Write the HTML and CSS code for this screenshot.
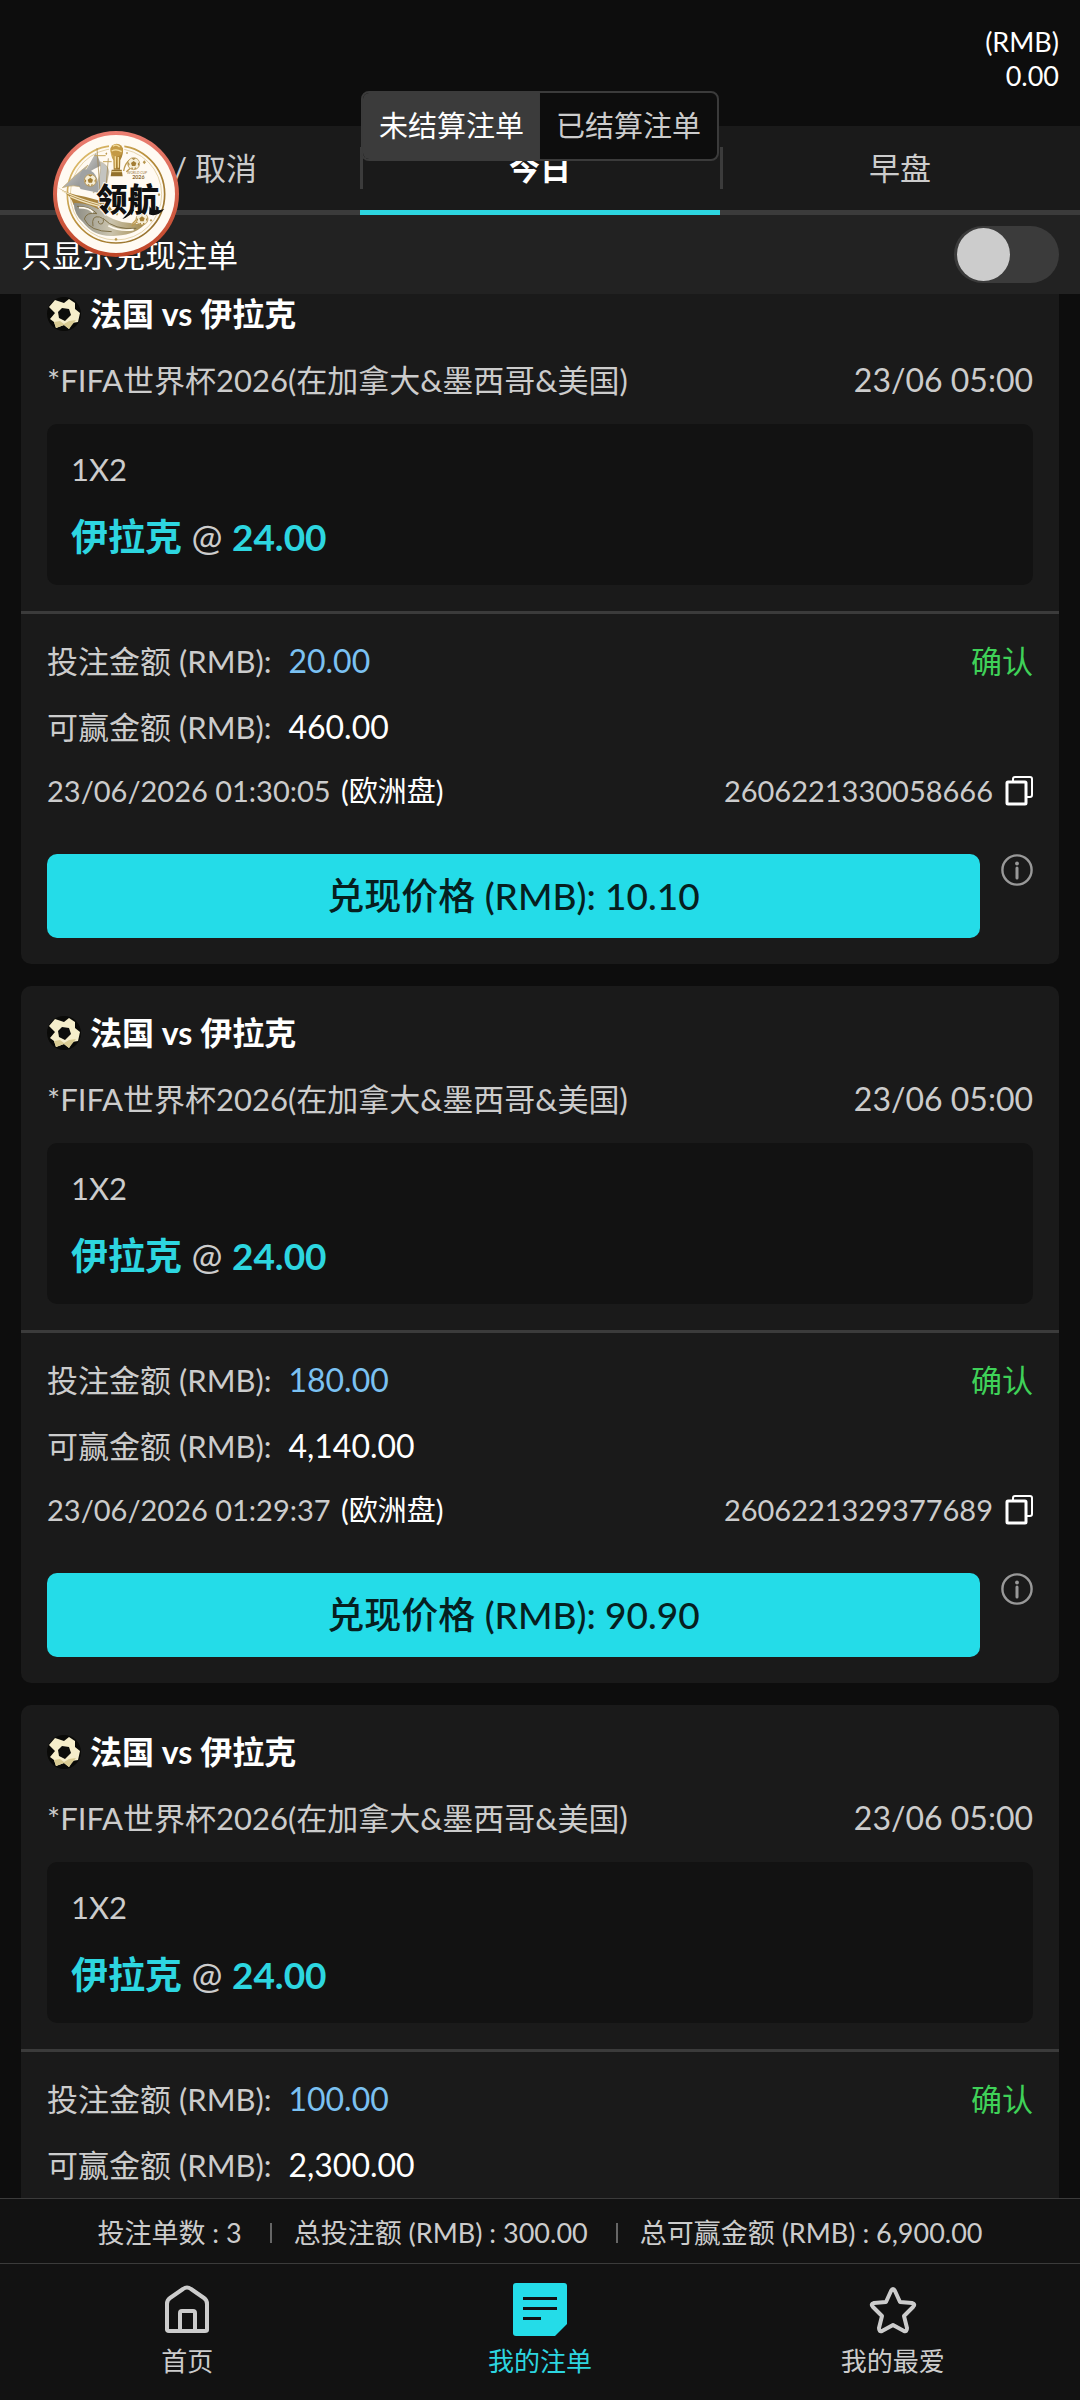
FILE: index.html
```
<!DOCTYPE html>
<html lang="zh-CN">
<head>
    <meta charset="UTF-8">
    <meta name="viewport" content="width=device-width, initial-scale=1.0">
    <title>我的注单</title>
    <link rel="stylesheet" href="styles.css">
</head>
<body>

    <!-- Shared icons -->
    <svg class="sprite" aria-hidden="true">
        <symbol id="icon-ball" viewBox="0 0 34 34">
            <circle cx="17" cy="17" r="17" fill="#0a0a08"/>
            <path d="M11 4 L17 6 L22 2 L28 6 L28 12 L33 16 L31 25 L25 26 L22 32 L17 28 L9 31 L7 25 L3 22 L8 16 L2 10 L8 3 Z" fill="#f6eecb"/>
            <path d="M7 25 L13 24 L17 27 L22 24 L29 23 L25 28 L22 32 L17 28 L9 31 Z" fill="#d9cb93"/>
            <path d="M15 11 L22 12 L24 18 L18 24 L12 21 L11 15 Z" fill="#0d0d0b"/>
        </symbol>
        <symbol id="icon-copy" viewBox="0 0 28 30">
            <path d="M8 6 V3 Q8 1 10 1 H25 Q27 1 27 3 V19 Q27 21 25 21 H22" fill="none" stroke="#fff" stroke-width="2"/>
            <rect x="2" y="6" width="19" height="22" rx="1" fill="none" stroke="#fff" stroke-width="3"/>
        </symbol>
        <symbol id="icon-info" viewBox="0 0 32 32">
            <circle cx="16" cy="16" r="14.6" fill="none" stroke="#999" stroke-width="2.4"/>
            <circle cx="16" cy="9.5" r="1.9" fill="#999"/>
            <path d="M16 14 V24" stroke="#999" stroke-width="3" stroke-linecap="round"/>
        </symbol>
    </svg>

    <header class="topbar">
        <div class="balance">
            <div>(RMB)</div>
            <div>0.00</div>
        </div>
        <div class="switcher">
            <button type="button" class="switcher-btn active">未结算注单</button>
            <button type="button" class="switcher-btn">已结算注单</button>
        </div>
    </header>

    <div class="tabs">
        <button type="button" class="tab">拒绝 / 取消</button>
        <button type="button" class="tab active">今日</button>
        <button type="button" class="tab">早盘</button>
    </div>

    <div class="filter">
        <label for="cashoutOnly">只显示兑现注单</label>
        <input type="checkbox" id="cashoutOnly" class="toggle">
    </div>

    <main class="bets" id="bets">
        <article class="card">
            <section class="match">
                <h2 class="teams"><svg class="ball"><use href="#icon-ball"/></svg>法国 vs 伊拉克</h2>
                <div class="row">
                    <span>*FIFA世界杯2026(在加拿大&amp;墨西哥&amp;美国)</span>
                    <time>23/06 05:00</time>
                </div>
                <div class="pick">
                    <div class="market">1X2</div>
                    <div class="odds"><b>伊拉克</b> <span>@</span> <b>24.00</b></div>
                </div>
            </section>
            <section class="detail">
                <div class="row">
                    <span class="amount">投注金额 (RMB): <span class="stake">20.00</span></span>
                    <span class="status">确认</span>
                </div>
                <div class="row">
                    <span class="amount">可赢金额 (RMB): <span class="win">460.00</span></span>
                </div>
                <div class="row meta">
                    <span>23/06/2026 01:30:05 <span class="market-type">(欧洲盘)</span></span>
                    <span class="bet-id">2606221330058666
                        <button type="button" class="icon-btn" aria-label="复制"><svg class="copy"><use href="#icon-copy"/></svg></button>
                    </span>
                </div>
                <div class="cashout">
                    <button type="button" class="cashout-btn">兑现价格 (RMB): 10.10</button>
                    <button type="button" class="icon-btn" aria-label="说明"><svg class="info"><use href="#icon-info"/></svg></button>
                </div>
            </section>
        </article>

        <article class="card">
            <section class="match">
                <h2 class="teams"><svg class="ball"><use href="#icon-ball"/></svg>法国 vs 伊拉克</h2>
                <div class="row">
                    <span>*FIFA世界杯2026(在加拿大&amp;墨西哥&amp;美国)</span>
                    <time>23/06 05:00</time>
                </div>
                <div class="pick">
                    <div class="market">1X2</div>
                    <div class="odds"><b>伊拉克</b> <span>@</span> <b>24.00</b></div>
                </div>
            </section>
            <section class="detail">
                <div class="row">
                    <span class="amount">投注金额 (RMB): <span class="stake">180.00</span></span>
                    <span class="status">确认</span>
                </div>
                <div class="row">
                    <span class="amount">可赢金额 (RMB): <span class="win">4,140.00</span></span>
                </div>
                <div class="row meta">
                    <span>23/06/2026 01:29:37 <span class="market-type">(欧洲盘)</span></span>
                    <span class="bet-id">2606221329377689
                        <button type="button" class="icon-btn" aria-label="复制"><svg class="copy"><use href="#icon-copy"/></svg></button>
                    </span>
                </div>
                <div class="cashout">
                    <button type="button" class="cashout-btn">兑现价格 (RMB): 90.90</button>
                    <button type="button" class="icon-btn" aria-label="说明"><svg class="info"><use href="#icon-info"/></svg></button>
                </div>
            </section>
        </article>

        <article class="card">
            <section class="match">
                <h2 class="teams"><svg class="ball"><use href="#icon-ball"/></svg>法国 vs 伊拉克</h2>
                <div class="row">
                    <span>*FIFA世界杯2026(在加拿大&amp;墨西哥&amp;美国)</span>
                    <time>23/06 05:00</time>
                </div>
                <div class="pick">
                    <div class="market">1X2</div>
                    <div class="odds"><b>伊拉克</b> <span>@</span> <b>24.00</b></div>
                </div>
            </section>
            <section class="detail">
                <div class="row">
                    <span class="amount">投注金额 (RMB): <span class="stake">100.00</span></span>
                    <span class="status">确认</span>
                </div>
                <div class="row">
                    <span class="amount">可赢金额 (RMB): <span class="win">2,300.00</span></span>
                </div>
            </section>
        </article>
    </main>

    <footer class="bottom">
        <div class="summary">
            <span>投注单数 : 3</span>
            <span>总投注额 (RMB) : 300.00</span>
            <span>总可赢金额 (RMB) : 6,900.00</span>
        </div>
        <nav class="nav">
            <a href="#" class="nav-item">
                <svg class="nav-icon" viewBox="0 0 54 54">
                    <path d="M7 47 V21 Q7 17 10 15 L23 6 Q27 3 31 6 L44 15 Q47 17 47 21 V47 Q47 48 45 48 H9 Q7 48 7 46 Z" fill="none" stroke="#ccc" stroke-width="4" stroke-linejoin="round"/>
                    <path d="M20 48 V30 Q20 28 22 28 H33 Q35 28 35 30 V48" fill="none" stroke="#ccc" stroke-width="4"/>
                </svg>
                首页
            </a>
            <a href="#" class="nav-item active">
                <svg class="nav-icon" viewBox="0 0 54 54">
                    <path d="M3 0 H51 Q54 0 54 3 V41 L42 53 H3 Q0 53 0 50 V3 Q0 0 3 0 Z" fill="#24dce8"/>
                    <path d="M10 15.5 H44 M10 25.5 H44 M10 35.5 H28" stroke="#121212" stroke-width="3"/>
                </svg>
                我的注单
            </a>
            <a href="#" class="nav-item">
                <svg class="nav-icon" viewBox="0 0 54 54">
                    <path d="M25 8 Q27 4 29 8 L34 19 L46 20 Q50 21 47 24 L38 33 L41 45 Q41 49 38 48 L27 42 L16 48 Q13 49 13 45 L16 33 L7 24 Q4 21 8 20 L20 19 Z" fill="none" stroke="#ccc" stroke-width="4" stroke-linejoin="round"/>
                </svg>
                我的最爱
            </a>
        </nav>
    </footer>

    <!-- Floating event badge -->
    <a href="#" class="badge" aria-label="领航">
        <svg viewBox="0 0 378 378">
            <defs>
                <linearGradient id="rim" x1="0" y1="0" x2="0" y2="1">
                    <stop offset="0" stop-color="#ec7f72"/>
                    <stop offset="1" stop-color="#bf4526"/>
                </linearGradient>
                <linearGradient id="gold" x1="0" y1="0" x2="1" y2="1">
                    <stop offset="0" stop-color="#e8c878"/>
                    <stop offset="0.5" stop-color="#b58b38"/>
                    <stop offset="1" stop-color="#8d6a2b"/>
                </linearGradient>
                <linearGradient id="sail" x1="0" y1="0" x2="1" y2="1">
                    <stop offset="0" stop-color="#d4d4d0"/>
                    <stop offset="1" stop-color="#858686"/>
                </linearGradient>
                <linearGradient id="wave" x1="0" y1="0" x2="1" y2="0">
                    <stop offset="0" stop-color="#8c8c84"/>
                    <stop offset="0.5" stop-color="#cbc4ae"/>
                    <stop offset="1" stop-color="#a08543"/>
                </linearGradient>
                <g id="football">
                    <circle r="18" fill="#f5edd5" stroke="#b08a3c" stroke-width="2"/>
                    <path d="M0 -8 L8 -2 L5 7 L-5 7 L-8 -2 Z M-7 -16 H7 L0 -11 Z M-17 -5 L-12 1 L-15 8 Z M17 -5 L12 1 L15 8 Z M-9 14 L-4 11 L-2 17 Z M9 14 L4 11 L2 17 Z" fill="#a37d33"/>
                </g>
            </defs>
            <circle cx="189" cy="189" r="189" fill="url(#rim)"/>
            <circle cx="189" cy="189" r="177" fill="#fffaf2"/>
            <circle cx="189" cy="190" r="146" fill="none" stroke="url(#gold)" stroke-width="5"/>
            <circle cx="189" cy="190" r="137" fill="none" stroke="#d8c18a" stroke-width="2"/>

            <!-- trophy -->
            <path d="M168 30 H214 V138 H168 Z" fill="#fffaf2"/>
            <path d="M173 52 Q171 72 181 88 L182 116 H201 L202 88 Q212 70 210 52 Z" fill="url(#gold)"/>
            <circle cx="191" cy="57" r="19" fill="#c49a45"/>
            <path d="M180 46 Q190 38 200 48 M176 60 Q190 52 206 62 M187 76 V112 M196 78 V110" stroke="#f3dc9c" stroke-width="4" fill="none"/>
            <path d="M176 116 H206 L209 136 H173 Z" fill="#92702c"/>
            <path d="M176 122 H207" stroke="#efd58f" stroke-width="3"/>

            <!-- ship -->
            <path d="M128 66 Q142 88 143 104 Q108 120 84 142 Q109 101 128 66 Z" fill="url(#sail)"/>
            <path d="M142 92 Q164 100 168 122 L160 164 L120 186 Q148 130 142 92 Z" fill="#c4c4c0" stroke="#a5894d" stroke-width="1"/>
            <path d="M105 102 Q72 128 28 170 Q68 158 88 172 Q82 132 105 102 Z" fill="url(#sail)" stroke="#c3a76b" stroke-width="2"/>
            <path d="M88 116 Q140 110 136 185 L82 174 Q75 138 88 116 Z" fill="#a0a2a2"/>
            <path d="M132 52 L142 198 M166 82 L158 180" stroke="#9b7d40" stroke-width="2"/>
            <path d="M124 74 H158 M150 92 H176" stroke="#c6a55b" stroke-width="3"/>
            <use href="#football" x="112" y="148"/>
            <path d="M12 168 Q50 192 96 197 L158 214 Q176 230 182 248 Q112 226 62 222 Q55 192 12 168 Z" fill="#a9843c"/>
            <path d="M28 180 Q84 206 142 221 M50 196 Q100 218 164 232" stroke="#f0e2bd" stroke-width="4" fill="none"/>

            <!-- wave -->
            <path d="M62 216 Q104 214 142 238 Q178 274 232 276 Q256 284 284 270 Q252 312 190 314 Q126 322 90 274 Q64 252 62 216 Z" fill="url(#wave)"/>
            <path d="M72 226 Q112 226 132 248 Q100 242 94 264 Q110 302 176 302 M120 286 Q114 252 140 258 Q158 264 148 278 Q136 282 136 270 M150 262 Q184 298 250 292" stroke="#7f7048" stroke-width="3" fill="none"/>
            <path d="M78 230 Q108 230 120 244 M166 284 Q200 302 242 296" stroke="#fffaf0" stroke-width="5" fill="none"/>

            <path d="M212 120 Q216 96 232 86 M220 122 L232 112" stroke="#bd9a50" stroke-width="4" fill="none"/>
            <use href="#football" x="242" y="98"/>
            <path d="M236 286 L258 268 M238 278 L256 260" stroke="#bd9a50" stroke-width="4"/>
            <use href="#football" x="267" y="264"/>
            <path d="M160 64 l3 4 -3 4 -3 -4 Z M222 62 l3 4 -3 4 -3 -4 Z M274 88 l5 6 -5 6 -5 -6 Z M318 186 l4 5 -4 5 -4 -5 Z M192 242 l4 6 -4 6 -4 -6 Z M189 320 l5 5 -5 5 -5 -5 Z M294 264 l4 4 -4 4 -4 -4 Z" fill="#b99850"/>

            <text x="252" y="130" class="badge-cup">WORLD CUP</text>
            <text x="256" y="145" class="badge-year">2026</text>
            <text x="224" y="240" class="badge-name">领航</text>
            <path d="M290 226 Q298 244 334 234 Q312 260 288 250 Z M244 236 Q232 256 208 264 Q226 246 232 234 Z" fill="#111"/>
        </svg>
    </a>

    <script>
        document.getElementById("bets").scrollTop = 49;
    </script>

</body>
</html>
```
FILE: styles.css
```
* {
    box-sizing: border-box;
}
body {
    margin: 0;
    height: 100vh;
    display: flex;
    flex-direction: column;
    overflow: hidden;
    position: relative;
    background-color: #0d0d0d;
    color: #ccc;
    font-family: Lato, "Noto Sans CJK SC", sans-serif;
    font-size: 31px;
    line-height: 44px;
}
button {
    margin: 0;
    padding: 0;
    border: 0;
    background: none;
    color: inherit;
    font: inherit;
    cursor: pointer;
}
a {
    color: inherit;
    text-decoration: none;
}
svg {
    display: block;
}
.sprite {
    position: absolute;
    width: 0;
    height: 0;
}

/* Top bar */
.topbar {
    flex: none;
    position: relative;
    height: 126px;
    padding: 25px 21px 0;
}
.balance {
    color: #fff;
    font-size: 27px;
    line-height: 34px;
    text-align: right;
}
.switcher {
    position: absolute;
    top: 91px;
    left: 50%;
    transform: translateX(-50%);
    z-index: 2;
    display: flex;
    height: 70px;
    border: 2px solid #3b3b3b;
    border-radius: 8px;
    background-color: #0d0d0d;
    overflow: hidden;
}
.switcher-btn {
    padding: 0 16px;
    font-size: 29px;
    white-space: nowrap;
}
.switcher-btn.active {
    background-color: #3b3b3b;
    color: #fff;
}

/* Tabs */
.tabs {
    flex: none;
    display: grid;
    grid-template-columns: repeat(3, 1fr);
    height: 89px;
    background-color: #1a1a1a;
}
.tab {
    position: relative;
    border-bottom: 5px solid #3b3b3b;
}
.tab.active {
    border-bottom-color: #2dd6e0;
    color: #fff;
    font-weight: bold;
}
.tab + .tab::before {
    content: "";
    position: absolute;
    left: 0;
    top: 21px;
    width: 3px;
    height: 42px;
    background-color: #3b3b3b;
}

/* Cash out filter */
.filter {
    flex: none;
    display: flex;
    align-items: center;
    justify-content: space-between;
    height: 79px;
    padding: 0 21px;
    background-color: #222;
    color: #fff;
}
.toggle {
    appearance: none;
    margin: 0;
    width: 105px;
    height: 57px;
    padding: 2px 3px;
    border-radius: 29px;
    background-color: #3b3b3b;
}
.toggle::before {
    content: "";
    display: block;
    width: 53px;
    height: 53px;
    border-radius: 50%;
    background-color: #ccc;
}
.toggle:checked::before {
    margin-left: auto;
}

/* Bet list */
.bets {
    flex: 1;
    min-height: 0;
    padding: 22px 21px;
    overflow-y: auto;
    scrollbar-width: none;
}
.card {
    margin-bottom: 22px;
    border-radius: 10px;
    background-color: #1a1a1a;
}
.match,
.detail {
    display: flex;
    flex-direction: column;
    gap: 22px;
    padding: 25px 26px 26px;
}
.match {
    border-bottom: 3px solid #3b3b3b;
}
.teams {
    display: flex;
    align-items: center;
    gap: 9px;
    margin: 0;
    color: #fff;
    font-size: 32px;
    font-weight: bold;
}
.ball {
    width: 34px;
    height: 34px;
}
.row {
    display: flex;
    justify-content: space-between;
}
.row time {
    font-size: 32px;
}
.pick {
    padding: 23px 24px 24px;
    border-radius: 10px;
    background-color: #121212;
}
.odds {
    height: 48px;
    margin-top: 22px;
    font-size: 37px;
    line-height: 48px;
}
.odds b {
    color: #2dd6e0;
}
.amount {
    height: 44px;
}
.stake,
.win {
    margin-left: 9px;
    font-size: 32px;
}
.stake {
    color: #7bc1f2;
}
.win,
.market-type {
    color: #fff;
}
.market-type {
    margin-left: 3px;
}
.status {
    color: #3fd158;
}
.meta {
    height: 40px;
    font-size: 29px;
    line-height: 40px;
}
.bet-id {
    display: flex;
    align-items: center;
    gap: 12px;
}
.copy {
    width: 28px;
    height: 30px;
}
.cashout {
    display: flex;
    align-items: flex-start;
    gap: 21px;
    margin-top: 21px;
}
.cashout-btn {
    flex: 1;
    height: 84px;
    border-radius: 10px;
    background-color: #24dce8;
    color: #06201f;
    font-size: 37px;
    font-weight: 500;
}
.info {
    width: 32px;
    height: 32px;
}

/* Totals and navigation */
.bottom {
    flex: none;
    background-color: #121212;
    font-size: 26px;
}
.summary {
    display: flex;
    align-items: center;
    justify-content: center;
    height: 66px;
    padding-top: 4px;
    border-top: 1px solid #3b3b3b;
    border-bottom: 1px solid #3b3b3b;
    font-size: 27px;
    white-space: nowrap;
}
.summary span + span {
    display: flex;
    align-items: center;
}
.summary span + span::before {
    content: "";
    width: 2px;
    height: 20px;
    margin: 0 22px 0 28px;
    background-color: #666;
}
.nav {
    display: grid;
    grid-template-columns: repeat(3, 1fr);
    padding: 19px 11px 17px;
}
.nav-item {
    display: flex;
    flex-direction: column;
    align-items: center;
    gap: 2px;
}
.nav-item.active {
    color: #2dd6e0;
}
.nav-icon {
    width: 54px;
    height: 54px;
}

/* Floating badge */
.badge {
    position: absolute;
    left: 53px;
    top: 131px;
    z-index: 3;
    width: 126px;
    height: 126px;
}
.badge-cup,
.badge-year,
.badge-name {
    text-anchor: middle;
}
.badge-cup {
    fill: #9a783a;
    font-size: 10px;
}
.badge-year {
    fill: #8a6830;
    font-size: 16px;
    font-weight: bold;
}
.badge-name {
    fill: #111;
    stroke: #fffaf2;
    stroke-width: 6px;
    paint-order: stroke;
    font-size: 94px;
    font-weight: 900;
}
```
